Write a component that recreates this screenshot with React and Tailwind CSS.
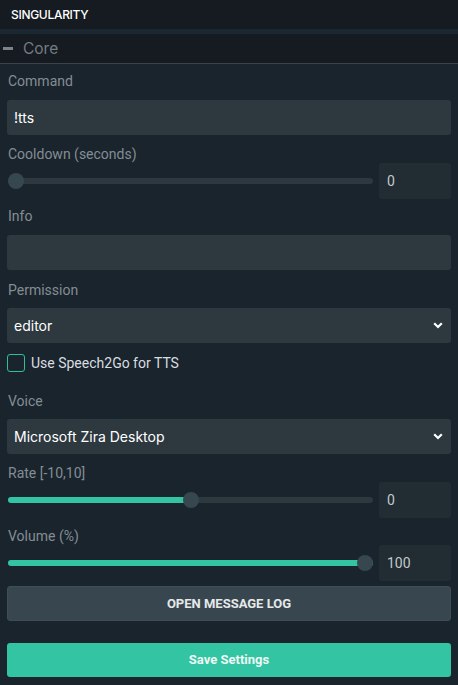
import React, { useState } from 'react'

const label = 'block h-[18px] leading-[18px] text-[14px] text-[#858d93]'
const field = 'w-full h-[35px] rounded-[3px] bg-[#2d383f] px-[7px] flex items-center text-[14px] text-white'

function Chevron() {
  return (
    <svg width="10" height="7" viewBox="0 0 10 7" className="ml-auto mr-[1px]">
      <path d="M1.2 1.2 L5 5 L8.8 1.2" fill="none" stroke="#fff" strokeWidth="2.2" />
    </svg>
  )
}

function Slider({ pct, fill, value }) {
  return (
    <div className="flex items-center h-[36px]">
      <div className="relative flex-1 h-[6px] ml-[1px] mr-[6px] rounded-full bg-[#2d383f]">
        {fill && (
          <div className="absolute left-0 top-0 h-full rounded-full bg-[#33c4a3]" style={{ width: `${pct}%` }} />
        )}
        <div
          className="absolute top-1/2 w-[16px] h-[16px] -mt-[8px] -ml-[8px] rounded-full bg-[#37474f]"
          style={{ left: `calc(${pct}% + ${8 - pct * 0.16}px)` }}
        />
      </div>
      <div className="w-[72px] h-[36px] rounded-[3px] bg-[#212c33] flex items-center pl-[8px] text-[14px] text-[#c3c9cc]">
        {value}
      </div>
    </div>
  )
}

export default function App() {
  const [tts, setTts] = useState(false)

  return (
    <div className="w-[458px] h-[685px] bg-[#19242d] overflow-hidden" style={{ fontFamily: 'Roboto, "Liberation Sans", sans-serif' }}>
      <div className="h-[29px] bg-[#151b21] flex items-center pl-[11px]">
        <span className="text-[12px] font-medium text-white tracking-[-0.3px]" style={{ fontFamily: 'Inter, sans-serif' }}>
          SINGULARITY
        </span>
      </div>
      <div className="h-[5px] bg-[#1c2831]" />
      <div className="h-[30px] bg-[#151b21] border-b border-[#39434a] flex items-center">
        <div className="w-[10px] h-[3px] bg-[#7b8388] ml-[3px]" />
        <span className="ml-[10px] text-[15.5px] text-[#737c82]" style={{ fontFamily: 'Inter, sans-serif' }}>Core</span>
      </div>

      <div className="px-[7px] pt-[8px]">
        <span className={label + ' pl-[1px]'}>Command</span>
        <div className={field + ' mt-[10px]'} style={{ fontFamily: 'Inter, sans-serif' }}>!tts</div>

        <span className={label + ' mt-[10px] pl-[1px]'}>Cooldown (seconds)</span>
        <Slider pct={0} value="0" />

        <span className={label + ' mt-[8px] pl-[1px]'}>Info</span>
        <div className={field + ' mt-[10px]'} />

        <span className={label + ' mt-[11px] pl-[1px]'}>Permission</span>
        <div className={field + ' mt-[9px]'} style={{ fontFamily: 'Inter, sans-serif' }}>
          editor
          <Chevron />
        </div>

        <label className="flex items-center h-[18px] mt-[11px] cursor-pointer" onClick={() => setTts(!tts)}>
          <span className="w-[18px] h-[18px] rounded-[3px] border-[1.5px] border-[#2ebf9f] flex-none" />
          <span className="ml-[6px] text-[14px] text-[#d9dde0]">Use Speech2Go for TTS</span>
        </label>

        <span className={label + ' mt-[20px] pl-[1px]'}>Voice</span>
        <div className={field + ' mt-[9px]'} style={{ fontFamily: 'Inter, sans-serif' }}>
          Microsoft Zira Desktop
          <Chevron />
        </div>

        <span className={label + ' mt-[10px] pl-[1px]'}>Rate [-10,10]</span>
        <Slider pct={50} fill value="0" />

        <span className={label + ' mt-[9px] pl-[1px]'}>Volume (%)</span>
        <Slider pct={100} fill value="100" />

        <button className="mt-[5px] w-full h-[35px] rounded-[3px] bg-[#38474f] border border-[#3f4e56] text-[13px] font-bold text-[#e6e9ea]">
          OPEN MESSAGE LOG
        </button>

        <button className="mt-[22px] w-full h-[34px] rounded-[3px] bg-[#33c4a3] text-[13px] font-bold text-[#eef8f5]">
          Save Settings
        </button>
      </div>
    </div>
  )
}
